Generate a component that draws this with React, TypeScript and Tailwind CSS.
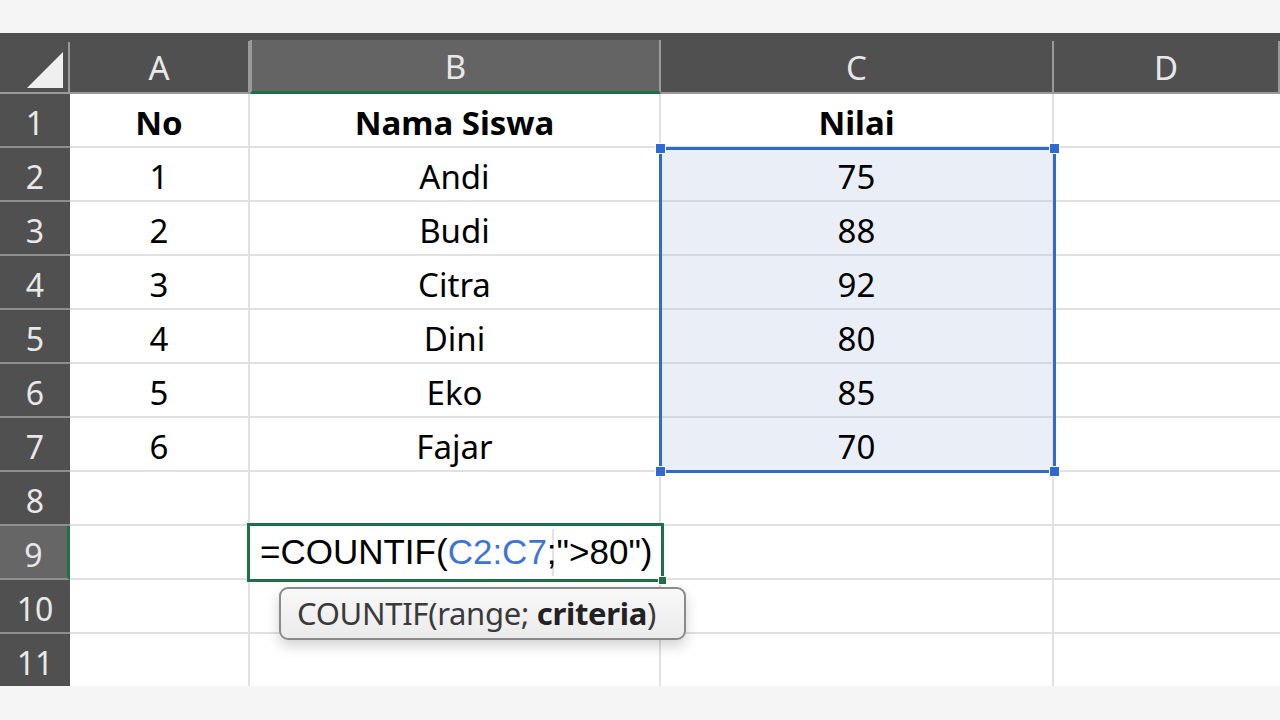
import React from 'react';

const COLS = ['A', 'B', 'C', 'D'];

const ROWS: { n: number; a?: string; b?: string; c?: string; bold?: boolean }[] = [
  { n: 1, a: 'No', b: 'Nama Siswa', c: 'Nilai', bold: true },
  { n: 2, a: '1', b: 'Andi', c: '75' },
  { n: 3, a: '2', b: 'Budi', c: '88' },
  { n: 4, a: '3', b: 'Citra', c: '92' },
  { n: 5, a: '4', b: 'Dini', c: '80' },
  { n: 6, a: '5', b: 'Eko', c: '85' },
  { n: 7, a: '6', b: 'Fajar', c: '70' },
  { n: 8 },
  { n: 9 },
  { n: 10 },
  { n: 11 },
];

const cellFont = { fontFamily: '"Noto Sans", "Open Sans", sans-serif' };

function Handle({ className }: { className: string }) {
  return <span className={`absolute h-[11px] w-[11px] border border-white bg-[#2f6ad0] ${className}`} />;
}

export default function App() {
  return (
    <div className="h-[720px] w-[1280px] overflow-hidden bg-[#f5f5f5] pt-[33px]" style={cellFont}>
      <div className="relative h-[653px] overflow-hidden bg-white">
        <div className="grid grid-cols-[70px_180px_411px_393px_226px] grid-rows-[61px_repeat(11,54px)]">
          {/* corner */}
          <div className="flex flex-col bg-[#505050]">
            <div className="h-[9px]" />
            <div className="relative flex-1 border-r-2 border-b-2 border-[#9a9a9a]">
              <svg className="absolute left-[27px] top-[10px]" width="36" height="36" viewBox="0 0 36 36">
                <path d="M36 0 L36 36 L0 36 Z" fill="#efefef" />
              </svg>
            </div>
          </div>
          {COLS.map((c) => (
            <div key={c} className="flex flex-col bg-[#505050]">
              <div className="h-[9px]" />
              <div
                className={[
                  'flex flex-1 items-center justify-center pt-[2px] text-[33px] text-[#e8e8e8]',
                  c === 'B' ? 'border-x-2 border-[#9a9a9a] border-b-[3px] border-b-[#1e7145] bg-[#646464]' : 'border-r-2 border-b-2 border-[#9a9a9a]',
                  c === 'A' ? 'border-r-0' : '',
                ].join(' ')}
              >
                {c}
              </div>
            </div>
          ))}
          {ROWS.map((r) => (
            <React.Fragment key={r.n}>
              <div
                className={[
                  'flex items-center justify-center border-b-2 border-[#8e8e8e] pt-[6px] text-[32px] text-[#e8e8e8]',
                  r.n === 9 ? 'border-r-[3px] border-r-[#1e7145] bg-[#666666]' : 'bg-[#505050]',
                ].join(' ')}
              >
                {r.n}
              </div>
              <div className={`flex items-center justify-center border-r-2 border-b-2 border-[#e1e1e1] pt-[6px] text-[33px] text-black ${r.bold ? 'font-bold' : ''}`}>
                {r.a}
              </div>
              <div className={`flex items-center justify-center border-r-2 border-b-2 border-[#e1e1e1] pt-[6px] text-[33px] text-black ${r.bold ? 'font-bold' : ''}`}>
                {r.b}
              </div>
              <div
                className={[
                  'flex items-center justify-center border-r-2 border-b-2 border-[#e1e1e1] pt-[6px] text-[33px] text-black',
                  r.bold ? 'font-bold' : '',
                  r.n >= 2 && r.n <= 7 ? 'bg-[#eaeef7] border-b-[#d3d7e0]' : '',
                ].join(' ')}
              >
                {r.c}
              </div>
              <div className="border-b-2 border-[#e1e1e1]" />
            </React.Fragment>
          ))}
        </div>

        {/* selected range C2:C7 */}
        <div className="pointer-events-none absolute left-[659px] top-[114px] h-[326px] w-[397px] border-[3px] border-[#2f6ad0]">
          <Handle className="-left-[7px] -top-[7px]" />
          <Handle className="-right-[7px] -top-[7px]" />
          <Handle className="-left-[7px] -bottom-[7px]" />
          <Handle className="-right-[7px] -bottom-[7px]" />
        </div>

        {/* active cell B9 */}
        <div className="absolute left-[247px] top-[490px] flex h-[59px] w-[417px] items-center border-[3px] border-[#1e7145] bg-white pl-[10px]">
          <span className="absolute left-[302px] top-[3px] h-[47px] w-[2px] bg-[#e3e3e3]" />
          <span className="relative whitespace-nowrap text-[35px] text-black" style={{ fontFamily: '"Liberation Sans", Arial, sans-serif' }}>
            =COUNTIF(<span className="text-[#3f74d6]">C2:C7</span>;"&gt;80")
          </span>
          <span className="absolute -bottom-[6px] -right-[6px] h-[9px] w-[9px] border border-white bg-[#1e7145]" />
        </div>

        {/* function tooltip */}
        <div className="absolute left-[279px] top-[554px] flex h-[53px] w-[407px] items-center rounded-[9px] border-2 border-[#8a8a8a] bg-gradient-to-b from-[#f8f8f8] to-[#ebebeb] pl-[16px] text-[31px] text-[#3a3a3a] shadow-[0_6px_14px_rgba(0,0,0,0.18)]">
          <span className="whitespace-nowrap tracking-[-0.3px]">
            COUNTIF(range; <b className="font-bold text-[#222]">criteria</b>)
          </span>
        </div>
      </div>
    </div>
  );
}
